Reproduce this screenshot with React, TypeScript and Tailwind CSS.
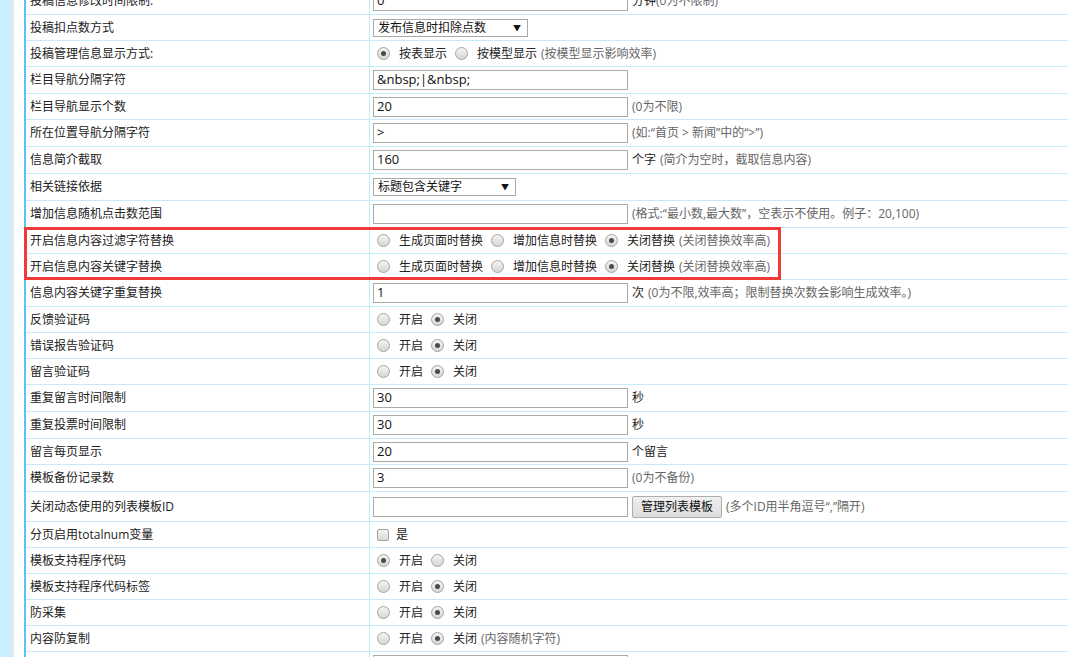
import React from "react";

const line = "border-[#c6eafa]";

function Row({ label, h, children }: { label: string; h: string; children?: React.ReactNode }) {
  return (
    <div className={`flex border-b ${line} ${h}`}>
      <div className={`w-[344px] shrink-0 border-r ${line} flex items-center pl-[4px] text-[#222]`}>{label}</div>
      <div className="flex-1 flex items-center pl-[3px] whitespace-nowrap">{children}</div>
    </div>
  );
}

function Input({ value = "", w = "w-[255px]" }: { value?: string; w?: string }) {
  return (
    <div className={`h-[20px] ${w} border border-[#a9a9a9] bg-white px-[3px] flex items-center text-[13px] text-[#111]`}>
      {value}
    </div>
  );
}

function Select({ value, w }: { value: string; w: string }) {
  return (
    <div className={`h-[18px] ${w} border border-[#a9a9a9] bg-white flex items-center justify-between pl-[4px] pr-[6px] text-[12px] text-[#111]`}>
      <span>{value}</span>
      <span className="text-[8px] leading-none">▼</span>
    </div>
  );
}

function Radio({ on, label }: { on?: boolean; label: string }) {
  return (
    <span className="inline-flex items-center">
      <span className="ml-[4px] mr-[9px] w-[13px] h-[13px] rounded-full border border-[#a3a3a3] bg-gradient-to-b from-[#f4f4f4] to-[#d6d6d6] flex items-center justify-center">
        {on && <span className="w-[5px] h-[5px] rounded-full bg-[#4a4a4a]" />}
      </span>
      <span className="text-[#222]">{label}</span>
    </span>
  );
}

function Hint({ children }: { children: React.ReactNode }) {
  return <span className="ml-[4px] text-[#666]">{children}</span>;
}

function Radios({ items, on, hint }: { items: string[]; on: number; hint?: string }) {
  return (
    <div className="flex items-center gap-[4px]">
      {items.map((t, i) => (
        <Radio key={t} label={t} on={i === on} />
      ))}
      {hint && <span className="text-[#666]">{hint}</span>}
    </div>
  );
}

export default function App() {
  return (
    <div className="relative h-[657px] w-[1068px] overflow-hidden bg-white flex font-['Open_Sans','Noto_Sans_CJK_SC',sans-serif] text-[12px]">
      <div className="w-[12px] shrink-0 bg-[#c9effe]" />
      <div className="w-[2px] shrink-0 bg-[#e4e8ea]" />
      <div className="w-[10px] shrink-0" />
      <div className="flex-1 border-l-2 border-[#5ec3f0]">
        <div className="-mt-[12px]">
          <Row label="投稿信息修改时间限制:" h="h-[27px]">
            <Input value="0" />
            <span className="ml-[4px] text-[#222]">分钟<span className="text-[#666]">(0为不限制)</span></span>
          </Row>
          <Row label="投稿扣点数方式" h="h-[26px]">
            <Select value="发布信息时扣除点数" w="w-[155px]" />
          </Row>
          <Row label="投稿管理信息显示方式:" h="h-[26px]">
            <Radios items={["按表显示", "按模型显示"]} on={0} hint="(按模型显示影响效率)" />
          </Row>
          <Row label="栏目导航分隔字符" h="h-[27px]">
            <Input value={"&nbsp;|&nbsp;"} />
          </Row>
          <Row label="栏目导航显示个数" h="h-[26px]">
            <Input value="20" />
            <Hint>(0为不限)</Hint>
          </Row>
          <Row label="所在位置导航分隔字符" h="h-[27px]">
            <Input value=">" />
            <Hint>{"(如:“首页 > 新闻”中的“>”)"}</Hint>
          </Row>
          <Row label="信息简介截取" h="h-[27px]">
            <Input value="160" />
            <span className="ml-[4px] text-[#222]">个字</span>
            <Hint>(简介为空时，截取信息内容)</Hint>
          </Row>
          <Row label="相关链接依据" h="h-[27px]">
            <Select value="标题包含关键字" w="w-[143px]" />
          </Row>
          <Row label="增加信息随机点击数范围" h="h-[27px]">
            <Input />
            <Hint>{"(格式:“最小数,最大数”，空表示不使用。例子：20,100)"}</Hint>
          </Row>
          <Row label="开启信息内容过滤字符替换" h="h-[26px]">
            <Radios items={["生成页面时替换", "增加信息时替换", "关闭替换"]} on={2} hint="(关闭替换效率高)" />
          </Row>
          <Row label="开启信息内容关键字替换" h="h-[26px]">
            <Radios items={["生成页面时替换", "增加信息时替换", "关闭替换"]} on={2} hint="(关闭替换效率高)" />
          </Row>
          <Row label="信息内容关键字重复替换" h="h-[27px]">
            <Input value="1" />
            <span className="ml-[4px] text-[#222]">次</span>
            <Hint>(0为不限,效率高；限制替换次数会影响生成效率。)</Hint>
          </Row>
          <Row label="反馈验证码" h="h-[26px]">
            <Radios items={["开启", "关闭"]} on={1} />
          </Row>
          <Row label="错误报告验证码" h="h-[26px]">
            <Radios items={["开启", "关闭"]} on={1} />
          </Row>
          <Row label="留言验证码" h="h-[26px]">
            <Radios items={["开启", "关闭"]} on={1} />
          </Row>
          <Row label="重复留言时间限制" h="h-[27px]">
            <Input value="30" />
            <span className="ml-[4px] text-[#222]">秒</span>
          </Row>
          <Row label="重复投票时间限制" h="h-[27px]">
            <Input value="30" />
            <span className="ml-[4px] text-[#222]">秒</span>
          </Row>
          <Row label="留言每页显示" h="h-[26px]">
            <Input value="20" />
            <span className="ml-[4px] text-[#222]">个留言</span>
          </Row>
          <Row label="模板备份记录数" h="h-[27px]">
            <Input value="3" />
            <Hint>(0为不备份)</Hint>
          </Row>
          <Row label="关闭动态使用的列表模板ID" h="h-[30px]">
            <Input />
            <button className="ml-[4px] h-[22px] px-[8px] border border-[#adadad] rounded-[2px] bg-gradient-to-b from-[#f0f0f0] to-[#dcdcdc] text-[12px] text-[#111]">
              管理列表模板
            </button>
            <Hint>{"(多个ID用半角逗号“,”隔开)"}</Hint>
          </Row>
          <Row label="分页启用totalnum变量" h="h-[26px]">
            <span className="ml-[4px] mr-[7px] w-[12px] h-[12px] rounded-[2px] border border-[#a3a3a3] bg-gradient-to-b from-[#f4f4f4] to-[#d9d9d9]" />
            <span className="text-[#222]">是</span>
          </Row>
          <Row label="模板支持程序代码" h="h-[26px]">
            <Radios items={["开启", "关闭"]} on={0} />
          </Row>
          <Row label="模板支持程序代码标签" h="h-[26px]">
            <Radios items={["开启", "关闭"]} on={1} />
          </Row>
          <Row label="防采集" h="h-[26px]">
            <Radios items={["开启", "关闭"]} on={1} />
          </Row>
          <Row label="内容防复制" h="h-[26px]">
            <Radios items={["开启", "关闭"]} on={1} hint="(内容随机字符)" />
          </Row>
          <Row label="" h="h-[27px]">
            <Input />
          </Row>
        </div>
      </div>
      {/* highlight box over the two replace rows */}
      <div className="absolute left-[24px] top-[227px] w-[757px] h-[53px] border-[3px] border-[#f03a3a]" />
    </div>
  );
}
